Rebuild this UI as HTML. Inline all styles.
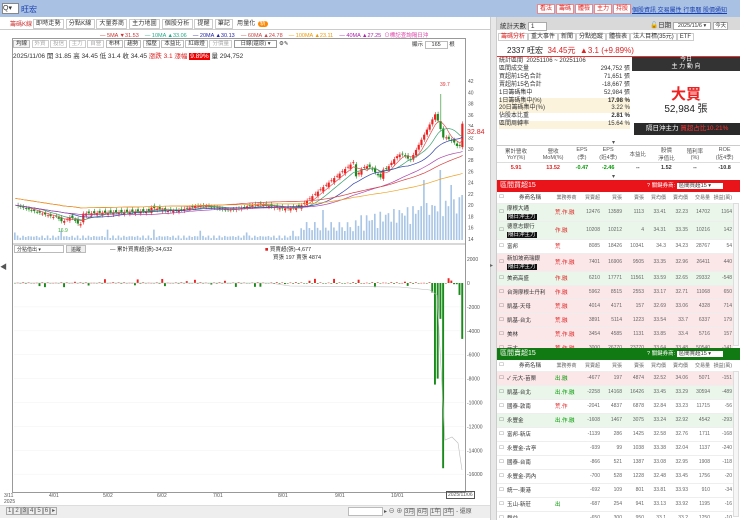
<!DOCTYPE html>
<html><head><meta charset="utf-8">
<style>
*{margin:0;padding:0;box-sizing:border-box}
body{width:740px;height:520px;overflow:hidden;background:#fff;font-family:"Liberation Sans","Noto Sans CJK TC",sans-serif;font-size:7px;color:#333;position:relative}
.a{position:absolute;white-space:nowrap}
.rb{position:absolute;border:1px solid #e88;background:#fff;color:#d22;font-size:6px;height:10px;line-height:8px;padding:0 2px}
table{border-collapse:collapse}
.tb{table-layout:fixed}
.tb td{font-size:5px;text-align:right;padding:0 1px;color:#666;border-bottom:1px solid #eee;overflow:hidden;white-space:nowrap}
.tb td.n{text-align:left;color:#333;font-size:5.5px}
</style></head><body>
<div class="a" style="left:0;top:0;width:740px;height:17px;background:#a9c2e3"></div>
<div class="a" style="left:2px;top:3px;width:17px;height:11px;background:#fff;border:1px solid #888;font-size:7px;line-height:9px">Q▾</div>
<div class="a" style="left:21px;top:4px;font-size:8px;color:#1a3fb0">旺宏</div>
<div class="rb" style="left:537px;top:4px">看法</div><div class="rb" style="left:556px;top:4px">籌碼</div><div class="rb" style="left:575px;top:4px">體檢</div><div class="rb" style="left:594px;top:4px">主力</div><div class="rb" style="left:613px;top:4px">持股</div>
<div class="a" style="left:632px;top:5px;font-size:6px;color:#1a3fb0;text-decoration:underline">個股資訊 交易屬性 行事曆 股價通知</div>
<div class="a" style="left:0;top:17px;width:490px;height:13px;background:#fff;border-bottom:1px solid #ccc"></div>
<div class="a" style="left:10px;top:19px;font-size:6px;color:#c33">籌碼K線</div>
<div class="a" style="left:33px;top:18px;font-size:6px;letter-spacing:.2px">
<span style="border:1px solid #ccc;padding:1px 2px">即時走勢</span> <span style="border:1px solid #ccc;padding:1px 2px">分點K線</span> <span style="border:1px solid #ccc;padding:1px 2px">大量券商</span> <span style="border:1px solid #ccc;padding:1px 2px">主力地圖</span> <span style="border:1px solid #ccc;padding:1px 2px">個股分析</span> <span style="border:1px solid #ccc;padding:1px 2px">提醒</span> <span style="border:1px solid #ccc;padding:1px 2px">筆記</span> <span style="padding:1px 2px">用量化</span><span style="background:#f80;color:#fff;border-radius:4px;padding:0 2px">新</span></div>
<div class="a" style="left:100px;top:31px;font-size:5.5px"><span style="color:#c33">— 5MA ▼31.53</span>&nbsp;&nbsp;&nbsp;&nbsp;<span style="color:#2a8">— 10MA ▲33.06</span>&nbsp;&nbsp;&nbsp;&nbsp;<span style="color:#22a">— 20MA ▲30.13</span>&nbsp;&nbsp;&nbsp;&nbsp;<span style="color:#c44">— 60MA ▲24.78</span>&nbsp;&nbsp;&nbsp;&nbsp;<span style="color:#e90">— 100MA ▲23.11</span>&nbsp;&nbsp;&nbsp;&nbsp;<span style="color:#a2a">— 40MA ▲27.25</span>&nbsp;&nbsp;<span style="color:#d4a">⊙標記查詢隔日沖</span></div>
<div class="a" style="left:12px;top:38px;width:454px;height:455px;border:1px solid #999"></div>
<div class="a" style="left:13px;top:39px;font-size:5.5px;color:#333"><span style="border:1px solid #bbb;background:#f4f4f4;padding:0 2px">均線</span> <span style="border:1px solid #ccc;color:#aaa;padding:0 2px">外資</span> <span style="border:1px solid #ccc;color:#aaa;padding:0 2px">投信</span> <span style="border:1px solid #ccc;color:#aaa;padding:0 2px">主力</span> <span style="border:1px solid #ccc;color:#aaa;padding:0 2px">自營</span> <span style="border:1px solid #bbb;padding:0 2px">布林</span> <span style="border:1px solid #bbb;padding:0 2px">趨勢</span> <span style="border:1px solid #bbb;padding:0 2px">撐壓</span> <span style="border:1px solid #bbb;padding:0 2px">本益比</span> <span style="border:1px solid #bbb;padding:0 2px">紅綠燈</span> <span style="border:1px solid #ccc;color:#aaa;padding:0 2px">分價量</span> <span style="border:1px solid #999;padding:0 6px">日線(還原) ▾</span> ⚙✎</div>
<div class="a" style="left:412px;top:40px;font-size:5.5px">顯示 <span style="border:1px solid #bbb;padding:0 6px">165</span> 根</div>
<div class="a" style="left:13px;top:50px;font-size:6.5px">2025/11/06 開 31.85 高 34.45 低 31.4 收 34.45 <span style="color:#d22">漲跌 3.1 漲幅 </span><span style="background:#e00;color:#fff;padding:0 1px">9.89%</span> 量 294,752</div>
<svg class="a" style="left:0;top:0" width="490" height="520" id="ch"></svg>
<div class="a" style="left:14px;top:245px;width:50px;height:8px;border:1px solid #bbb;font-size:5px;padding-left:2px">分點借出 ▾</div>
<div class="a" style="left:66px;top:245px;width:20px;height:8px;border:1px solid #bbb;background:#eee;font-size:5px;text-align:center">追蹤</div>
<div class="a" style="left:110px;top:245px;font-size:5.5px">— 累計買賣超(張)-34,632</div>
<div class="a" style="left:265px;top:245px;font-size:5.5px"><span style="color:#d22">■</span> 買賣超(張)-4,677<br><span style="margin-left:8px">買張 197 賣張 4874</span></div>
<div class="a" style="left:0;top:262px;font-size:7px;color:#555">◀</div>
<div class="a" style="left:4px;top:493px;font-size:5px;line-height:6px;color:#555">3/11<br>2025</div>
<div class="a" style="left:49px;top:493px;font-size:5px;color:#555">4/01</div><div class="a" style="left:103px;top:493px;font-size:5px;color:#555">5/02</div><div class="a" style="left:157px;top:493px;font-size:5px;color:#555">6/02</div><div class="a" style="left:213px;top:493px;font-size:5px;color:#555">7/01</div><div class="a" style="left:278px;top:493px;font-size:5px;color:#555">8/01</div><div class="a" style="left:335px;top:493px;font-size:5px;color:#555">9/01</div><div class="a" style="left:391px;top:493px;font-size:5px;color:#555">10/01</div>
<div class="a" style="left:446px;top:491px;font-size:5px;border:1px solid #555;padding:0 1px;color:#555">2025/11/06</div>
<div class="a" style="left:0;top:505px;width:490px;height:13px;background:#eee;border-top:1px solid #ddd"></div>
<div class="a" style="left:6px;top:507px;font-size:6px;color:#555"><span style="border:1px solid #aaa;padding:0 1px">1</span><span style="border:1px solid #aaa;padding:0 1px">2</span><span style="border:1px solid #aaa;padding:0 1px;background:#ccc">3</span><span style="border:1px solid #aaa;padding:0 1px">4</span><span style="border:1px solid #aaa;padding:0 1px">5</span><span style="border:1px solid #aaa;padding:0 1px">6</span><span style="border:1px solid #aaa;padding:0 1px">▸</span></div>
<div class="a" style="left:348px;top:507px;width:35px;height:9px;background:#fff;border:1px solid #bbb"></div>
<div class="a" style="left:384px;top:506px;font-size:6px;color:#555">▸ ⊖ ⊕ <span style="border:1px solid #aaa">3月</span> <span style="border:1px solid #aaa">6月</span> <span style="border:1px solid #aaa">1年</span> <span style="border:1px solid #aaa">3年</span> - 還原</div>
<div class="a" style="left:490px;top:17px;width:7px;height:503px;background:#e8e8e8;border-left:1px solid #ccc;border-right:1px solid #ccc"></div>
<div class="a" style="left:490px;top:262px;font-size:6px;color:#666">▸</div>
<div class="a" style="left:497px;top:17px;width:243px;height:13px;background:#d9d9d9"></div>
<div class="a" style="left:500px;top:20px;font-size:6.5px">統計天數 <span style="background:#fff;border:1px solid #aaa;padding:0 12px 0 2px">1</span></div>
<div class="a" style="left:650px;top:19px;font-size:6.5px">🔓日期 <span style="background:#fff;border:1px solid #aaa;padding:0 4px;font-size:5.5px">2025/11/6 ▾</span> <span style="background:#fff;border:1px solid #aaa;padding:0 1px;font-size:5.5px">今天</span></div>
<div class="a" style="left:498px;top:31px;font-size:6px"><span style="border:1px solid #ccc;color:#d22;padding:0 2px">籌碼分析</span><span style="border:1px solid #ccc;padding:0 2px">重大事件</span><span style="border:1px solid #ccc;padding:0 2px">新聞</span><span style="border:1px solid #ccc;padding:0 2px">分點追蹤</span><span style="border:1px solid #ccc;padding:0 2px">體檢表</span><span style="border:1px solid #ccc;padding:0 2px">法人目標(35元)</span><span style="border:1px solid #ccc;padding:0 2px">ETF</span></div>
<div class="a" style="left:507px;top:45px;font-size:8px;color:#222">2337 旺宏 <span style="color:#d22">&nbsp;34.45元 &nbsp;▲3.1 (+9.89%)</span></div>
<div class="a" style="left:497px;top:56px;width:243px;height:1px;background:#e33"></div>
<div class="a" style="left:499px;top:58px;width:131px;font-size:6px;line-height:7.9px">
<div>統計區間 &nbsp;20251106 ~ 20251106</div>
<div>區間成交量<span style="float:right">294,752 張</span></div>
<div>買超前15名合計<span style="float:right">71,651 張</span></div>
<div>賣超前15名合計<span style="float:right">-18,667 張</span></div>
<div>1日籌碼集中<span style="float:right">52,984 張</span></div>
<div style="background:#fbf3dc">1日籌碼集中(%)<span style="float:right;font-weight:bold">17.98 %</span></div>
<div style="background:#fbf3dc">20日籌碼集中(%)<span style="float:right">3.22 %</span></div>
<div>佔股本比重<span style="float:right;font-weight:bold">2.81 %</span></div>
<div style="background:#fbf3dc">區間周轉率<span style="float:right">15.64 %</span></div>
</div>
<div class="a" style="left:632px;top:57px;width:108px;height:14px;background:#333;color:#fff;font-size:6px;text-align:center;line-height:7px">今日<br>主 力 動 向</div>
<div class="a" style="left:632px;top:83px;width:108px;text-align:center;font-size:15px;color:#e22;font-weight:bold">大買</div>
<div class="a" style="left:632px;top:100px;width:108px;text-align:center;font-size:10px;color:#222">52,984 張</div>
<div class="a" style="left:634px;top:123px;width:106px;height:12px;background:#2a2a2a;color:#fff;font-size:6.5px;line-height:12px;padding-left:12px">隔日沖主力 <span style="color:#f33">買超占比10.21%</span></div>
<div class="a" style="left:612px;top:139px;font-size:6px;color:#555">▾</div>
<table class="a" style="left:497px;top:145px;width:243px;font-size:5.5px;text-align:center;border-top:1px solid #ccc">
<tr style="color:#555;height:17px"><td>累計營收<br>YoY(%)</td><td>營收<br>MoM(%)</td><td>EPS<br>(季)</td><td>EPS<br>(近4季)</td><td>本益比</td><td>股價<br>淨值比</td><td>殖利率<br>(%)</td><td>ROE<br>(近4季)</td></tr>
<tr style="font-weight:bold;height:10px;border-top:1px solid #ddd"><td style="color:#d22">5.91</td><td style="color:#d22">13.52</td><td style="color:#090">-0.47</td><td style="color:#090">-2.46</td><td>--</td><td>1.52</td><td>--</td><td>-10.8</td></tr></table>
<div class="a" style="left:612px;top:173px;font-size:6px;color:#555">▾</div>
<div class="a" style="left:497px;top:180px;width:243px;height:12px;background:#e8141a;color:#fff;font-size:7px;line-height:12px;padding-left:3px">區間買超15<span style="position:absolute;left:150px;font-size:5.5px">? 關鍵券商: <span style="background:#fff;color:#333;padding:0 12px 0 2px">區間買超15 ▾</span></span></div>
<div class="a" style="left:497px;top:348px;width:243px;height:12px;background:#127a12;color:#fff;font-size:7px;line-height:12px;padding-left:3px">區間賣超15<span style="position:absolute;left:150px;font-size:5.5px">? 關鍵券商: <span style="background:#fff;color:#333;padding:0 12px 0 2px">區間賣超15 ▾</span></span></div>
<div id="t1" class="a" style="left:497px;top:192px;width:236px;height:156px;overflow:hidden"></div>
<div id="t2" class="a" style="left:497px;top:360px;width:236px;height:158px;overflow:hidden"></div>
<div class="a" style="left:733px;top:203px;width:6px;height:143px;border:1px solid #ddd;background:#f6f6f6"></div>
<div class="a" style="left:733px;top:371px;width:6px;height:146px;border:1px solid #ddd;background:#f6f6f6"></div>
<script>
var cg='<colgroup><col style="width:9px"><col style="width:48px"><col style="width:25px"><col style="width:22px"><col style="width:22px"><col style="width:22px"><col style="width:22px"><col style="width:22px"><col style="width:22px"><col style="width:22px"></colgroup>';
var hdr='<tr style="height:11px;background:#fff"><td style="text-align:center">☐</td><td class="n" style="text-align:center">券商名稱</td><td style="text-align:center">業務券商</td><td>買賣超</td><td>買張</td><td>賣張</td><td>買均價</td><td>賣均價</td><td>交易量</td><td>損益(萬)</td></tr>';
function mk(id,rows){var h='<table class="tb" style="width:236px">'+cg+hdr;rows.forEach(function(r){var tag=r[9]?'<br><span style="background:#111;color:#fff;padding:0 1px">隔日沖主力</span>':'';h+='<tr style="height:'+(r[9]?18:14)+'px;background:'+r[10]+'"><td style="text-align:center">☐</td><td class="n">'+r[0]+tag+'</td><td class="n" style="color:'+(r[1][0]=='出'?'#090':'#d22')+'">'+r[1]+'</td><td>'+r.slice(2,9).join('</td><td>')+'</td></tr>'});document.getElementById(id).innerHTML=h+'</table>'}
var G='#e9f6e9',R='#fbe6e8',W='#fff';
mk('t1',[['摩根大通','荒.作.融',12476,13589,1113,33.41,32.23,14702,1164,1,G],['德意志銀行','作.融',10208,10212,4,34.31,33.35,10216,142,1,G],['富邦','荒',8085,18426,10341,34.3,34.23,28767,54,0,W],['新加坡商瑞銀','荒.作.融',7401,16906,9505,33.35,32.96,26411,440,1,R],['美商高盛','作.融',6210,17771,11561,33.59,32.65,29332,-548,0,G],['台灣摩根士丹利','作.融',5962,8515,2553,33.17,32.71,11068,650,0,R],['凱基-天母','荒.融',4014,4171,157,32.69,33.06,4328,714,0,R],['凱基-台北','荒.融',3891,5114,1223,33.54,33.7,6337,179,0,R],['美林','荒.作.融',3454,4585,1131,33.85,33.4,5716,157,0,R],['元大','荒.作.融',3000,26770,23770,33.64,33.48,50540,-141,0,R]]);
mk('t2',[['✓ 元大-苗栗','出.融',-4677,197,4874,32.52,34.06,5071,-151,0,R],['凱基-台北','出.作.融',-2258,14168,16426,33.45,33.29,30594,-489,0,G],['國泰-敦南','荒.作',-2041,4837,6878,32.84,33.23,11715,-56,0,W],['永豐金','出.作.融',-1608,1467,3075,33.24,32.92,4542,-293,0,G],['富邦-新店','',-1139,286,1425,32.58,32.76,1711,-168,0,W],['永豐金-古亭','',-939,99,1038,33.38,32.04,1137,-240,0,W],['國泰-台南','',-866,521,1387,33.08,32.95,1908,-118,0,W],['永豐金-丙內','',-700,528,1228,32.48,33.45,1756,-20,0,W],['統一-東港','',-692,109,801,33.81,33.93,910,-34,0,W],['玉山-新莊','出',-687,254,941,33.13,33.92,1195,-16,0,W],['群益','',-650,300,950,33.1,33.2,1250,-10,0,W]]);
var s='',N=165,x0=14,w=450/N;
function py(p){return 239-(p-14)*5.64}
var P=[];for(var i=0;i<N;i++){var t=i,p;
if(t<15)p=20-t*0.15;else if(t<25)p=17.8-(t-15)*0.08+Math.sin(t)*0.5;else if(t<50)p=18.5+(t-25)*0.02;else if(t<105)p=19.3+Math.sin(t*0.3)*0.4+(t-50)*0.01;else if(t<125)p=20+(t-105)*0.4;else if(t<145)p=27+Math.sin(t*0.5)*1.2-(t<135?1.5:0)+(t-125)*0.05;else if(t<155)p=28+(t-145)*0.9;else if(t<158)p=35-(t-155)*1.5;else p=32-(t-158)*0.3;
if(t==162)p=30.5;if(t==164)p=34.45;P.push(p)}
for(var g=14;g<=42;g+=2){s+='<text x="468" y="'+(py(g)+2)+'" font-size="5" fill="#555">'+g+'</text>'}
for(i=0;i<N;i++){var v=i<105?1.5+Math.abs(Math.sin(i*1.7))*3+(i%17==0?6:0):(i<125?4+Math.abs(Math.sin(i*2.1))*14:6+Math.abs(Math.sin(i*1.3))*18+(i-125)*0.5);if(i==113)v=30;if(i==150)v=60;if(i==156)v=70;if(i==160)v=55;if(i==164)v=45;var x=x0+i*w;s+='<rect x="'+x+'" y="'+(240-v)+'" width="'+(w*0.6)+'" height="'+v+'" fill="#a9c6e6"/>'}
for(i=1;i<N;i++){var o=P[i-1]+Math.sin(i*3.1)*0.4,c=P[i],x=x0+i*w,col=c>=o?'#e22':'#1a8a1a';var hi=Math.max(o,c)+0.4,lo=Math.min(o,c)-0.4;if(i==156)hi=39.7;
s+='<line x1="'+(x+w/2)+'" x2="'+(x+w/2)+'" y1="'+py(hi)+'" y2="'+py(lo)+'" stroke="'+col+'" stroke-width=".6"/><rect x="'+x+'" y="'+py(Math.max(o,c))+'" width="'+(w*0.8)+'" height="'+Math.max(0.8,Math.abs(o-c)*5.64)+'" fill="'+col+'"/>'}
function ma(n,col){var d='';for(i=0;i<N;i++){var a=0,k=0;for(var j=Math.max(0,i-n+1);j<=i;j++){a+=P[j];k++}var y=py(a/k+(n>=60?1.2:0));d+=(i?'L':'M')+(x0+i*w+w/2).toFixed(1)+' '+y.toFixed(1)}s+='<path d="'+d+'" fill="none" stroke="'+col+'" stroke-width=".7"/>'}
ma(5,'#e05050');ma(10,'#3aa070');ma(20,'#3344aa');ma(40,'#aa44aa');ma(60,'#d84040');ma(100,'#f0a020');
s+='<text x="440" y="86" font-size="5" fill="#d33">39.7</text><text x="58" y="232" font-size="5" fill="#3a3">16.9</text>';
s+='<rect x="466" y="127" width="22" height="9" fill="#fff"/><text x="467" y="134" font-size="7" fill="#d22">32.84</text>';
s+='<line x1="12" x2="466" y1="244" y2="244" stroke="#999" stroke-width=".8"/>';
function ly(v){return 283-v*0.01195}
for(var g=2000;g>=-16000;g-=2000){s+='<text x="467" y="'+(ly(g)+2)+'" font-size="5" fill="#555">'+g+'</text>';if(g<0)s+='<line x1="14" x2="464" y1="'+ly(g)+'" y2="'+ly(g)+'" stroke="#f2f2f2" stroke-width=".5"/>'}
var big=[-800,-8500,-8000,-3000,-15500,0,400,200,-100,-100,-1000,-4677];
for(i=0;i<N;i++){var v=(i%9==0||i%11==0)?Math.sin(i*2.7)*350:Math.sin(i*2.7)*60;if(i>=153){v=big[i-153]||0}var x=x0+i*w;s+='<rect x="'+x+'" y="'+(v>0?ly(v):ly(0))+'" width="'+(w*0.7)+'" height="'+Math.max(.5,Math.abs(v)*0.01195)+'" fill="'+(v>0?'#e22':'#1a8a1a')+'"/>'}
s+='<path d="M14 283 L270 283 L290 286 L400 287 L430 290 L437 295 L445 440 L452 437 L458 443 L462 470" fill="none" stroke="#bbb" stroke-width=".6"/>';
document.getElementById('ch').innerHTML=s;
</script>
</body></html>
